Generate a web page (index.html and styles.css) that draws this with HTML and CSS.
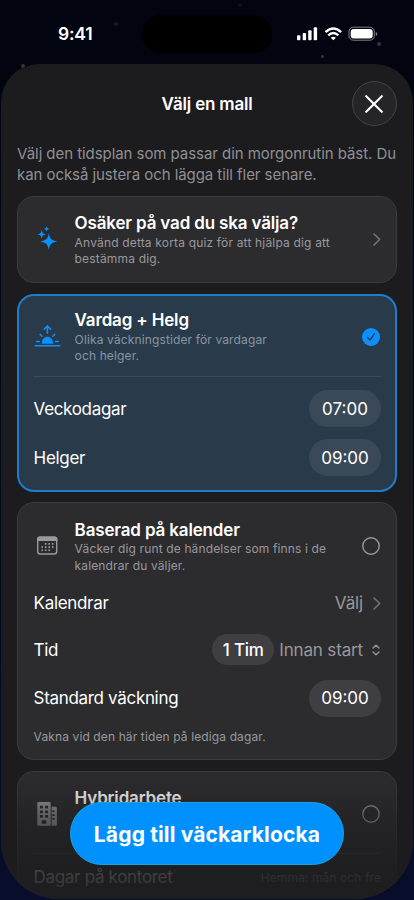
FILE: index.html
```html
<!DOCTYPE html>
<html lang="sv">
<head>
<meta charset="utf-8">
<meta name="viewport" content="width=device-width, initial-scale=1">
<title>Välj en mall</title>
<link rel="stylesheet" href="styles.css">
</head>
<body>
<div class="phone">
  <i class="star s1"></i><i class="star s2"></i><i class="star s3"></i><i class="star s4"></i><i class="star s5"></i>
  <header class="status">
    <span class="clock">9:41</span>
    <span class="island"></span>
    <svg class="status-icons" width="82" height="16" viewBox="0 0 82 16">
      <g fill="#fff">
        <rect x="1" y="9.2" width="3.4" height="5" rx="1"/><rect x="6.7" y="7.1" width="3.4" height="7.1" rx="1"/><rect x="12.2" y="4.3" width="3.4" height="9.9" rx="1"/><rect x="17.7" y="1.3" width="3.4" height="12.9" rx="1"/>
        <path d="M37.3 14.2 34.7 11.7Q37.3 9.7 39.9 11.7Z"/>
        <rect x="54.7" y="2.9" width="22" height="9.7" rx="3"/>
        <path d="M79.8 6v4q1.5-.6 1.5-2t-1.5-2Z" opacity=".5"/>
      </g>
      <g fill="none" stroke="#fff">
        <path d="M29.5 6.2Q37.3-1.1 45.1 6.2M32.2 9.3Q37.3 4.7 42.4 9.3" stroke-width="2.3"/>
        <rect x="53" y="1.2" width="25.3" height="13" rx="4.4" stroke-width="1" opacity=".5"/>
      </g>
    </svg>
  </header>

  <main class="sheet">
    <div class="sheet-head">
      <h1>Välj en mall</h1>
      <button class="close" aria-label="Stäng"><svg width="18" height="18" viewBox="0 0 18 18"><path d="M1.2 1.2 16.8 16.8M16.8 1.2 1.2 16.8" stroke="#fff" stroke-width="2.1" stroke-linecap="round"/></svg></button>
    </div>
    <p class="intro">Välj den tidsplan som passar din morgonrutin bäst. Du<br>kan också justera och lägga till fler senare.</p>

    <div class="cards">
      <section class="card quiz">
        <div class="card-head">
          <svg class="icon" width="28" height="28" viewBox="0 0 28 28" fill="#0a91ff">
            <path d="M15.8 7.1C16.7 12.9 18.4 14.4 24.4 15.5 18.4 16.6 16.7 18.1 15.8 23.9 14.9 18.1 13.2 16.6 7.2 15.5 13.2 14.4 14.9 12.9 15.8 7.1Z"/>
            <path d="M8.7 3.8C9.3 7.1 10.1 7.7 13.3 8.3 10.1 8.9 9.3 9.5 8.7 12.8 8.1 9.5 7.3 8.9 4.1 8.3 7.3 7.7 8.1 7.1 8.7 3.8Z"/>
            <path d="M13.7 .1C14.1 2.1 14.6 2.5 16.5 2.9 14.6 3.3 14.1 3.7 13.7 5.7 13.3 3.7 12.8 3.3 10.9 2.9 12.8 2.5 13.3 2.1 13.7 .1Z"/>
          </svg>
          <div class="copy"><h2>Osäker på vad du ska välja?</h2><p>Använd detta korta quiz för att hjälpa dig att<br>bestämma dig.</p></div>
          <svg class="chev" width="8" height="13" viewBox="0 0 8 13"><path d="M1 1 6.7 6.5 1 12"/></svg>
        </div>
      </section>

      <section class="card selected">
        <div class="card-head">
          <svg class="icon" width="28" height="28" viewBox="0 0 28 28" fill="none" stroke="#0a91ff" stroke-width="1.5" stroke-linecap="round">
            <path d="M2.3 23.8H26.7"/>
            <path d="M8.7 21.7C8.9 12.3 19.9 12.3 20.1 21.7Z" fill="#0a91ff" stroke="none"/>
            <path d="M14.4 11.3V4.3M11.3 7.1 14.4 4 17.5 7.1M7.2 12.4 9 14.3M21.6 12.4 19.8 14.3M3.6 19.6H6.3M22.5 19.6H25.2"/>
          </svg>
          <div class="copy"><h2>Vardag + Helg</h2><p>Olika väckningstider för vardagar<br>och helger.</p></div>
          <svg class="radio" width="18" height="18" viewBox="0 0 18 18"><circle cx="9" cy="9" r="9" fill="#0a91ff"/><path d="M5.5 9.4 8.1 12.1 12.4 5.7" fill="none" stroke="#293b4a" stroke-width="1.4" stroke-linecap="round" stroke-linejoin="round"/></svg>
        </div>
        <hr>
        <div class="row r49"><span>Veckodagar</span><b class="pill">07:00</b></div>
        <div class="row r49"><span>Helger</span><b class="pill">09:00</b></div>
      </section>

      <section class="card calendar">
        <div class="card-head">
          <svg class="icon" width="28" height="28" viewBox="0 0 28 28">
            <rect x="4.7" y="5.1" width="19" height="16.9" rx="2.5" fill="none" stroke="#98989e" stroke-width="1.4"/>
            <path d="M4 8.9V7Q4 4.4 6.7 4.4H21.7Q24.4 4.4 24.4 7V8.9Z" fill="#98989e"/>
            <path d="M11.9 11.9H20.5M8.4 15.1H20.5M8.4 18.3H18" stroke="#98989e" stroke-width="1.6" stroke-dasharray="1.6 1.9"/>
          </svg>
          <div class="copy"><h2>Baserad på kalender</h2><p>Väcker dig runt de händelser som finns i de<br>kalendrar du väljer.</p></div>
          <svg class="radio" width="18" height="18" viewBox="0 0 18 18"><circle cx="9" cy="9" r="8.2" fill="none" stroke="#98989e" stroke-width="1.4"/></svg>
        </div>
        <div class="row first"><span>Kalendrar</span><span class="value">Välj<svg class="chev" width="8" height="13" viewBox="0 0 8 13"><path d="M1 1 6.7 6.5 1 12"/></svg></span></div>
        <div class="row r47"><span>Tid</span><span class="value time"><b class="pill small">1 Tim</b><span>Innan start</span><svg class="updown" width="8" height="12" viewBox="0 0 8 12"><path d="M1 4.1 4 1.3 7 4.1M1 7.9 4 10.7 7 7.9"/></svg></span></div>
        <div class="row r49"><span>Standard väckning</span><b class="pill">09:00</b></div>
        <p class="note">Vakna vid den här tiden på lediga dagar.</p>
      </section>

      <section class="card hybrid">
        <div class="card-head">
          <svg class="icon" width="28" height="28" viewBox="0 0 28 28">
            <path d="M5.7 2H16.3Q17.7 2 17.7 3.4V25.8H5.7Q4.3 25.8 4.3 24.4V3.4Q4.3 2 5.7 2Z" fill="#98989e"/>
            <path d="M18.6 6.8H22.5Q23.9 6.8 23.9 8.2V24.6Q23.9 25.8 22.5 25.8H18.6Z" fill="#98989e"/>
            <rect x="8.6" y="20.2" width="4.800" height="3.500" rx=".5" fill="#2b2b2d"/>
            <path d="M8.400 5.800V17.800M13.600 5.800V17.800" stroke="#2b2b2d" stroke-width="3" stroke-dasharray="2.800 1.800"/>
            <path d="M20.400 10.500V21.500" stroke="#2b2b2d" stroke-width="2.300" stroke-dasharray="1.600 2.200"/>
          </svg>
          <div class="copy"><h2>Hybridarbete</h2></div>
          <svg class="radio" width="18" height="18" viewBox="0 0 18 18"><circle cx="9" cy="9" r="8.2" fill="none" stroke="#98989e" stroke-width="1.4"/></svg>
        </div>
        <hr>
        <div class="row r47"><span>Dagar på kontoret</span><small>Hemma: mån och fre</small></div>
      </section>
    </div>
    <div class="fade"></div>
    <button class="cta">Lägg till väckarklocka</button>
  </main>
</div>
</body>
</html>
```

FILE: styles.css
```css
* { box-sizing: border-box; }
body { margin: 0; background: #02040f; font-family: Inter, "Liberation Sans", sans-serif; color: #fff; -webkit-font-smoothing: antialiased; }
h1, h2, p { margin: 0; }
button { border: 0; padding: 0; font: inherit; color: inherit; }

.phone { position: relative; width: 414px; height: 900px; overflow: hidden; background: linear-gradient(#02040f 0, #02040f 64px, #060a20 70%, #080d2b); }
.star { position: absolute; width: 4px; height: 4px; border-radius: 50%; background: #34363f; filter: blur(.7px); }
.s1 { left: 21px; top: 64px; }
.s2 { left: 114px; top: 22px; opacity: .4; }
.s3 { left: 321px; top: 55px; width: 3px; height: 3px; }
.s4 { left: 377px; top: 42px; }
.s5 { left: 238px; top: 3px; opacity: .25; }

.status { display: flex; align-items: center; height: 64px; padding: 4px 36px 0 58px; }
.clock { width: 84px; font-size: 17.5px; font-weight: 600; letter-spacing: -.2px; padding-bottom: 1px; }
.island { width: 130px; height: 38px; border-radius: 19px; background: #000; margin-right: 23.5px; }
.status-icons { flex: none; }

.sheet { position: relative; margin: 0 1px; height: 835px; overflow: hidden; border-radius: 38px 38px 58px 58px; background: #1c1c1e; padding: 0 16px; }
.sheet-head { display: grid; grid-template-columns: 45px 1fr 45px; align-items: center; padding-top: 17px; }
.sheet-head h1 { grid-column: 2; text-align: center; font-size: 17px; font-weight: 600; line-height: 24px; letter-spacing: -.2px; }
.close { width: 45px; height: 45px; display: grid; place-items: center; border-radius: 50%; background: #252527; border: 1px solid #444446; padding-right: 1px; }

.intro { margin-top: 18px; height: 52px; color: #8f8f95; font-size: 15px; line-height: 20.5px; letter-spacing: -.06px; white-space: nowrap; }

.cards { display: flex; flex-direction: column; gap: 11px; width: 380px; }
.card { border: 1px solid #3c3c3e; border-radius: 17px; background: #2c2c2e; padding: 0 15px; flex: none; }
.quiz { height: 87px; }
.selected { height: 198px; border: 2px solid #1f7ccb; background: #293b4a; padding: 0 14px; }
.calendar { height: 258px; margin-top: -1px; }
.hybrid { height: 180px; }
.card-head { display: flex; align-items: center; height: 84px; }
.quiz .card-head { height: 86px; }
.selected .card-head { height: 80px; padding-top: 2px; }
.icon { width: 28px; height: 28px; flex: none; margin: 0 13.6px 0 0; overflow: visible; }
.selected .icon { margin-bottom: 3px; }
.copy { flex: 1; white-space: nowrap; padding-top: 1px; }
.copy h2 { font-size: 17px; font-weight: 600; line-height: 21.5px; letter-spacing: -.16px; }
.copy p { font-size: 12px; line-height: 16.5px; color: #98989e; letter-spacing: .17px; }
.selected .copy p { color: #8796a3; letter-spacing: .13px; }
.calendar .copy p { letter-spacing: .13px; }
.selected .radio, .calendar .radio, .hybrid .radio { margin-right: 1px; }
.selected .radio { margin-bottom: 1px; }
.calendar .radio, .calendar .icon { margin-bottom: 2px; }
.quiz .chev { margin-bottom: 1px; }
.chev { fill: none; stroke: #737378; stroke-width: 1.6; stroke-linecap: round; stroke-linejoin: round; }
hr { height: 1px; margin: 0; border: 0; background: #3c4b58; }
.hybrid hr { background: #454548; margin-top: -3px; }
.hybrid .copy h2 { margin-bottom: 32px; }

.row { display: flex; align-items: center; justify-content: space-between; padding-left: .6px; font-size: 17px; letter-spacing: -.32px; white-space: nowrap; }
.r49 { height: 49px; }
.r47 { height: 47.5px; }
.hybrid .r47 { height: 46px; }
.selected hr { margin-bottom: 7px; }
.calendar .card-head { height: 84px; padding-top: 3px; }
.first { height: 46px; margin-top: -7px; }
.pill { display: grid; place-items: center; width: 72px; height: 37px; border-radius: 19px; background: #3e3e43; font-weight: 400; font-size: 17px; letter-spacing: 0; }
.selected .pill { background: #3a4958; }
.pill.small { width: 62px; height: 31px; }
.value { display: flex; align-items: center; color: #98989e; letter-spacing: -.15px; }
.value .chev { margin-left: 10px; }
.time .pill { color: #fff; margin-right: 5px; font-weight: 500; letter-spacing: -.2px; }
.updown { margin: 0 1px 0 9px; fill: none; stroke: #98989e; stroke-width: 1.3; stroke-linecap: round; stroke-linejoin: round; }
.note { margin: 6px 0 0 .6px; color: #98989e; font-size: 12px; line-height: 16px; letter-spacing: .12px; white-space: nowrap; }
.row small { font-size: 12px; color: #98989e; letter-spacing: .1px; }

.fade { position: absolute; left: 0; right: 0; bottom: 0; height: 135px; background: linear-gradient(rgba(28,28,30,0), rgba(28,28,30,.2) 24%, rgba(28,28,30,.46) 38%, rgba(28,28,30,.82) 75%, rgba(28,28,30,.93)); }
.cta { position: absolute; left: 69px; top: 738px; width: 274px; height: 63px; padding-top: 1px; border-radius: 32px; background: #0091ff; border: 1px solid #16a6dc; font-size: 21px; font-weight: 700; letter-spacing: .15px; white-space: nowrap; }
```
